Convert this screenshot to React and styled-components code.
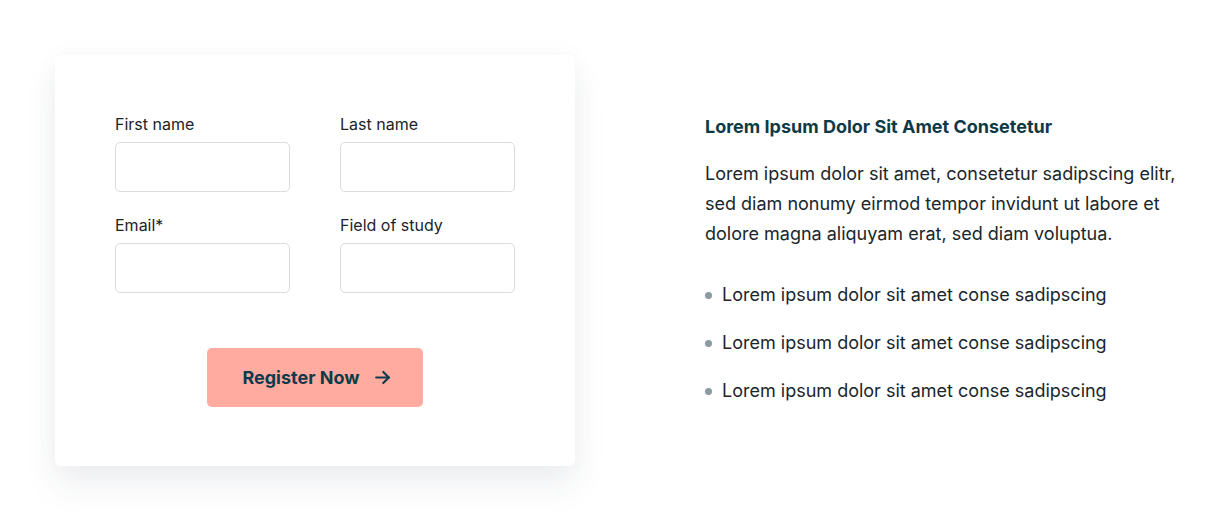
import React from "react";
import styled, { createGlobalStyle } from "styled-components";

const Global = createGlobalStyle`
  html, body { margin: 0; padding: 0; background: #ffffff; }
  body { font-family: Inter, "Noto Sans", sans-serif; -webkit-font-smoothing: antialiased; }
  * { box-sizing: border-box; }
`;

const Page = styled.div`
  display: flex;
  align-items: flex-start;
  padding: 55px 0 60px 55px;
  gap: 130px;
`;

const Card = styled.form`
  width: 520px;
  background: #ffffff;
  border-radius: 6px;
  padding: 60px 60px 59px;
  box-shadow: 0 20px 34px rgba(40, 55, 75, 0.075), 0 0 26px rgba(40, 55, 75, 0.03);
  display: flex;
  flex-direction: column;
`;

const Grid = styled.div`
  display: grid;
  grid-template-columns: 175px 175px;
  column-gap: 50px;
  row-gap: 24px;
`;

const Field = styled.label`
  display: flex;
  flex-direction: column;
  gap: 9px;
`;

const LabelText = styled.span`
  font-size: 16px;
  line-height: 18px;
  color: #1d2327;
`;

const Input = styled.input`
  height: 50px;
  width: 100%;
  border: 1px solid #dcdcdc;
  border-radius: 5px;
  background: #fff;
  outline: none;
  font: inherit;
  padding: 0 12px;
`;

const ButtonRow = styled.div`
  display: flex;
  justify-content: center;
  margin-top: 55px;
`;

const Button = styled.button`
  width: 216px;
  height: 59px;
  border: none;
  border-radius: 5px;
  background: #ffaba0;
  color: #0f3a4a;
  font-family: Inter, sans-serif;
  font-size: 18px;
  font-weight: 700;
  display: flex;
  align-items: center;
  justify-content: center;
  gap: 13px;
  cursor: pointer;
  padding: 0 0 0 4px;
`;

const Info = styled.div`
  margin-top: 60px;
  width: 490px;
  display: flex;
  flex-direction: column;
`;

const Heading = styled.h3`
  margin: 0;
  font-size: 18px;
  line-height: 24px;
  font-weight: 700;
  color: #0e3a47;
`;

const Paragraph = styled.p`
  margin: 20px 0 0;
  font-size: 18px;
  line-height: 30px;
  color: #1a262b;
`;

const List = styled.ul`
  list-style: none;
  margin: 32px 0 0;
  padding: 0;
  display: flex;
  flex-direction: column;
  gap: 20px;
`;

const Item = styled.li`
  display: flex;
  align-items: center;
  gap: 10px;
  font-size: 18px;
  line-height: 28px;
  color: #1a262b;
  &::before {
    content: "";
    width: 7px;
    height: 7px;
    border-radius: 50%;
    background: #8a9ba4;
    flex: none;
  }
`;

const Arrow = () => (
  <svg width="19" height="19" viewBox="0 0 24 24" fill="none" stroke="#0f3a4a" strokeWidth="2.7" strokeLinecap="round" strokeLinejoin="round">
    <path d="M4 12h16" />
    <path d="M13 5l7 7-7 7" />
  </svg>
);

export default function App() {
  const fields = ["First name", "Last name", "Email*", "Field of study"];
  return (
    <>
      <Global />
      <Page>
        <Card onSubmit={(e) => e.preventDefault()}>
          <Grid>
            {fields.map((f) => (
              <Field key={f}>
                <LabelText>{f}</LabelText>
                <Input type="text" />
              </Field>
            ))}
          </Grid>
          <ButtonRow>
            <Button type="submit">
              Register Now <Arrow />
            </Button>
          </ButtonRow>
        </Card>
        <Info>
          <Heading>Lorem Ipsum Dolor Sit Amet Consetetur</Heading>
          <Paragraph>
            Lorem ipsum dolor sit amet, consetetur sadipscing elitr, sed diam nonumy eirmod tempor invidunt ut labore et dolore magna aliquyam erat, sed diam voluptua.
          </Paragraph>
          <List>
            <Item>Lorem ipsum dolor sit amet conse sadipscing</Item>
            <Item>Lorem ipsum dolor sit amet conse sadipscing</Item>
            <Item>Lorem ipsum dolor sit amet conse sadipscing</Item>
          </List>
        </Info>
      </Page>
    </>
  );
}
